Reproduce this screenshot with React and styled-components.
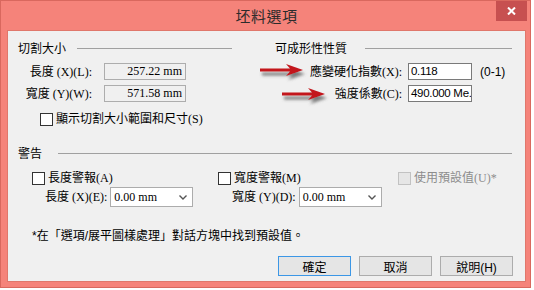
import React from "react";
import styled, { createGlobalStyle } from "styled-components";

const GlobalStyle = createGlobalStyle`
  html, body {
    margin: 0;
    padding: 0;
    background: #fff;
  }
  body {
    font-family: "Liberation Sans", "Noto Sans CJK TC", sans-serif;
    font-size: 12px;
    color: #000;
  }
`;

const serif = `"Liberation Serif", "Noto Sans CJK TC", serif`;
const sans = `"Liberation Sans", "Noto Sans CJK TC", sans-serif`;

const Window = styled.div`
  width: 531px;
  height: 288px;
  box-sizing: border-box;
  background: #f5837a;
  border: 1px solid #d9685e;
  padding: 0 4px 5px 6px;
  display: flex;
  flex-direction: column;
`;

const TitleBar = styled.div`
  position: relative;
  height: 29px;
  margin-right: -4px;
  display: flex;
  align-items: center;
  justify-content: center;
  padding-right: 4px;

  .title {
    font-family: "Noto Sans CJK TC", sans-serif;
    font-size: 15px;
    line-height: 18px;
    color: #2b2b2b;
    letter-spacing: 0.5px;
  }
`;

const CloseButton = styled.div`
  position: absolute;
  top: 0;
  right: 3px;
  width: 31px;
  height: 20px;
  background: #c75050;
  display: flex;
  align-items: center;
  justify-content: center;
`;

const Client = styled.div`
  flex: 1;
  background: #f0f0f0;
  border: 1px solid #e0776b;
  padding: 10px 13px 0 10px;
  display: flex;
  flex-direction: column;
`;

const TopGrid = styled.div`
  display: grid;
  grid-template-columns: 214px 1fr;
  column-gap: 43px;
`;

const Column = styled.div`
  display: flex;
  flex-direction: column;
`;

const GroupHeader = styled.div`
  display: flex;
  align-items: center;
  gap: ${(p) => p.$gap}px;
  height: 14px;
  font-family: "Noto Sans CJK TC", sans-serif;
  font-size: 12px;
  line-height: 14px;

  &::after {
    content: "";
    flex: 1;
    height: 1px;
    background: #a0a0a0;
  }
`;

const Rows = styled.div`
  display: flex;
  flex-direction: column;
  gap: 5px;
  margin-top: 8px;
`;

const FieldRow = styled.div`
  position: relative;
  display: flex;
  align-items: center;
  height: 17px;
  gap: ${(p) => p.$gap}px;
`;

const Label = styled.span`
  width: ${(p) => p.$width}px;
  text-align: right;
  font-family: ${serif};
  font-size: 12px;
  line-height: 14px;
  white-space: nowrap;
`;

const Field = styled.div`
  box-sizing: border-box;
  width: ${(p) => p.$width}px;
  height: 17px;
  border: 1px solid ${(p) => (p.$readOnly ? "#adadad" : "#7a7a7a")};
  background: ${(p) => (p.$readOnly ? "#f0f0f0" : "#fff")};
  font-family: ${(p) => (p.$readOnly ? serif : sans)};
  font-size: ${(p) => (p.$readOnly ? 12 : 11.5)}px;
  letter-spacing: ${(p) => (p.$readOnly ? 0 : -0.3)}px;
  line-height: 15px;
  padding: 0 ${(p) => (p.$readOnly ? 3 : 2)}px;
  text-align: ${(p) => (p.$readOnly ? "right" : "left")};
  white-space: nowrap;
  overflow: hidden;
`;

const Range = styled.span`
  margin-left: 2px;
  font-family: ${sans};
  font-size: 12px;
`;

const ArrowMark = styled.svg`
  position: absolute;
  left: ${(p) => p.$left}px;
  top: ${(p) => p.$top}px;
  overflow: visible;
`;

const CheckLine = styled.label`
  display: flex;
  align-items: center;
  gap: 3px;
  height: 14px;
  padding-left: ${(p) => p.$indent || 0}px;
  margin-top: ${(p) => p.$top || 0}px;
  font-family: ${serif};
  font-size: 12px;
  line-height: 14px;
  white-space: nowrap;
  color: ${(p) => (p.$disabled ? "#8d8d8d" : "#000")};
`;

const Box = styled.span`
  box-sizing: border-box;
  width: 13px;
  height: 13px;
  flex: none;
  border: 1px solid ${(p) => (p.$disabled ? "#c2c2c2" : "#333")};
  background: ${(p) => (p.$disabled ? "#e6e6e6" : "#fff")};
`;

const WarnSection = styled.div`
  margin-top: 20px;
  display: flex;
  flex-direction: column;
`;

const WarnGrid = styled.div`
  display: grid;
  grid-template-columns: 186px 180px auto;
  margin-top: 11px;
  padding-left: 14px;
`;

const SubRow = styled.div`
  display: flex;
  align-items: center;
  gap: 3px;
  margin-top: 2px;
  padding-left: ${(p) => p.$indent}px;
`;

const Select = styled.div`
  box-sizing: border-box;
  width: 83px;
  height: 20px;
  border: 1px solid #acacac;
  background: #fff;
  display: flex;
  align-items: center;
  justify-content: space-between;
  padding: 0 5px 0 3px;
  font-family: ${serif};
  font-size: 12px;
`;

const Note = styled.div`
  margin-top: 22px;
  padding-left: 14px;
  font-family: ${sans};
  font-size: 12px;
  line-height: 14px;
  white-space: nowrap;
`;

const ButtonRow = styled.div`
  display: flex;
  justify-content: flex-end;
  gap: 8px;
  margin-top: 13px;
  margin-right: -1px;
`;

const Button = styled.div`
  box-sizing: border-box;
  width: 73px;
  height: 20px;
  border: 1px solid ${(p) => (p.$default ? "#3c97e6" : "#acacac")};
  background: #e5e5e5;
  display: flex;
  align-items: center;
  justify-content: center;
  font-family: ${sans};
  font-size: 12px;
`;

function Arrow({ left, top }) {
  return (
    <ArrowMark $left={left} $top={top} width="46" height="16" viewBox="0 0 46 16">
      <defs>
        <filter id="arrowShadow" x="-20%" y="-40%" width="150%" height="200%">
          <feDropShadow dx="2" dy="4" stdDeviation="1.4" floodColor="#555" floodOpacity="0.75" />
        </filter>
      </defs>
      <path
        d="M0 5.5 H30 L26 1 L43 7 L26 13 L30 8.5 H0 Z"
        fill="#c3141c"
        filter="url(#arrowShadow)"
      />
    </ArrowMark>
  );
}

function Chevron() {
  return (
    <svg width="8" height="5" viewBox="0 0 8 5">
      <path d="M0.5 0.5 L4 4 L7.5 0.5" fill="none" stroke="#555" strokeWidth="1.4" />
    </svg>
  );
}

function Check({ children, disabled, indent, top }) {
  return (
    <CheckLine $disabled={disabled} $indent={indent} $top={top}>
      <Box $disabled={disabled} />
      {children}
    </CheckLine>
  );
}

export default function App() {
  return (
    <>
      <GlobalStyle />
      <Window>
        <TitleBar>
          <span className="title">坯料選項</span>
          <CloseButton>
            <svg width="9" height="8" viewBox="0 0 9 8">
              <path d="M1 0.5 L8 7.5 M8 0.5 L1 7.5" stroke="#fff" strokeWidth="2" />
            </svg>
          </CloseButton>
        </TitleBar>
        <Client>
          <TopGrid>
            <Column>
              <GroupHeader $gap={11}>切割大小</GroupHeader>
              <Rows>
                <FieldRow $gap={12}>
                  <Label $width={74}>長度 (X)(L):</Label>
                  <Field $width={82} $readOnly>257.22 mm</Field>
                </FieldRow>
                <FieldRow $gap={12}>
                  <Label $width={74}>寬度 (Y)(W):</Label>
                  <Field $width={82} $readOnly>571.58 mm</Field>
                </FieldRow>
              </Rows>
              <Check indent={22} top={10}>顯示切割大小範圍和尺寸(S)</Check>
            </Column>
            <Column>
              <GroupHeader $gap={18}>可成形性性質</GroupHeader>
              <Rows>
                <FieldRow $gap={6}>
                  <Arrow left={-15} top={0} />
                  <Label $width={127}>應變硬化指數(X):</Label>
                  <Field $width={64}>0.118</Field>
                  <Range>(0-1)</Range>
                </FieldRow>
                <FieldRow $gap={6}>
                  <Arrow left={7} top={2} />
                  <Label $width={127}>強度係數(C):</Label>
                  <Field $width={64}>490.000 Me.</Field>
                </FieldRow>
              </Rows>
            </Column>
          </TopGrid>

          <WarnSection>
            <GroupHeader $gap={16}>警告</GroupHeader>
            <WarnGrid>
              <Column>
                <Check>長度警報(A)</Check>
                <SubRow $indent={13}>
                  <Label>長度 (X)(E):</Label>
                  <Select>
                    <span>0.00 mm</span>
                    <Chevron />
                  </Select>
                </SubRow>
              </Column>
              <Column>
                <Check>寬度警報(M)</Check>
                <SubRow $indent={14}>
                  <Label>寬度 (Y)(D):</Label>
                  <Select>
                    <span>0.00 mm</span>
                    <Chevron />
                  </Select>
                </SubRow>
              </Column>
              <Column>
                <Check disabled>使用預設值(U)*</Check>
              </Column>
            </WarnGrid>
          </WarnSection>

          <Note>*在「選項/展平圖樣處理」對話方塊中找到預設值。</Note>

          <ButtonRow>
            <Button $default>確定</Button>
            <Button>取消</Button>
            <Button>說明(H)</Button>
          </ButtonRow>
        </Client>
      </Window>
    </>
  );
}
